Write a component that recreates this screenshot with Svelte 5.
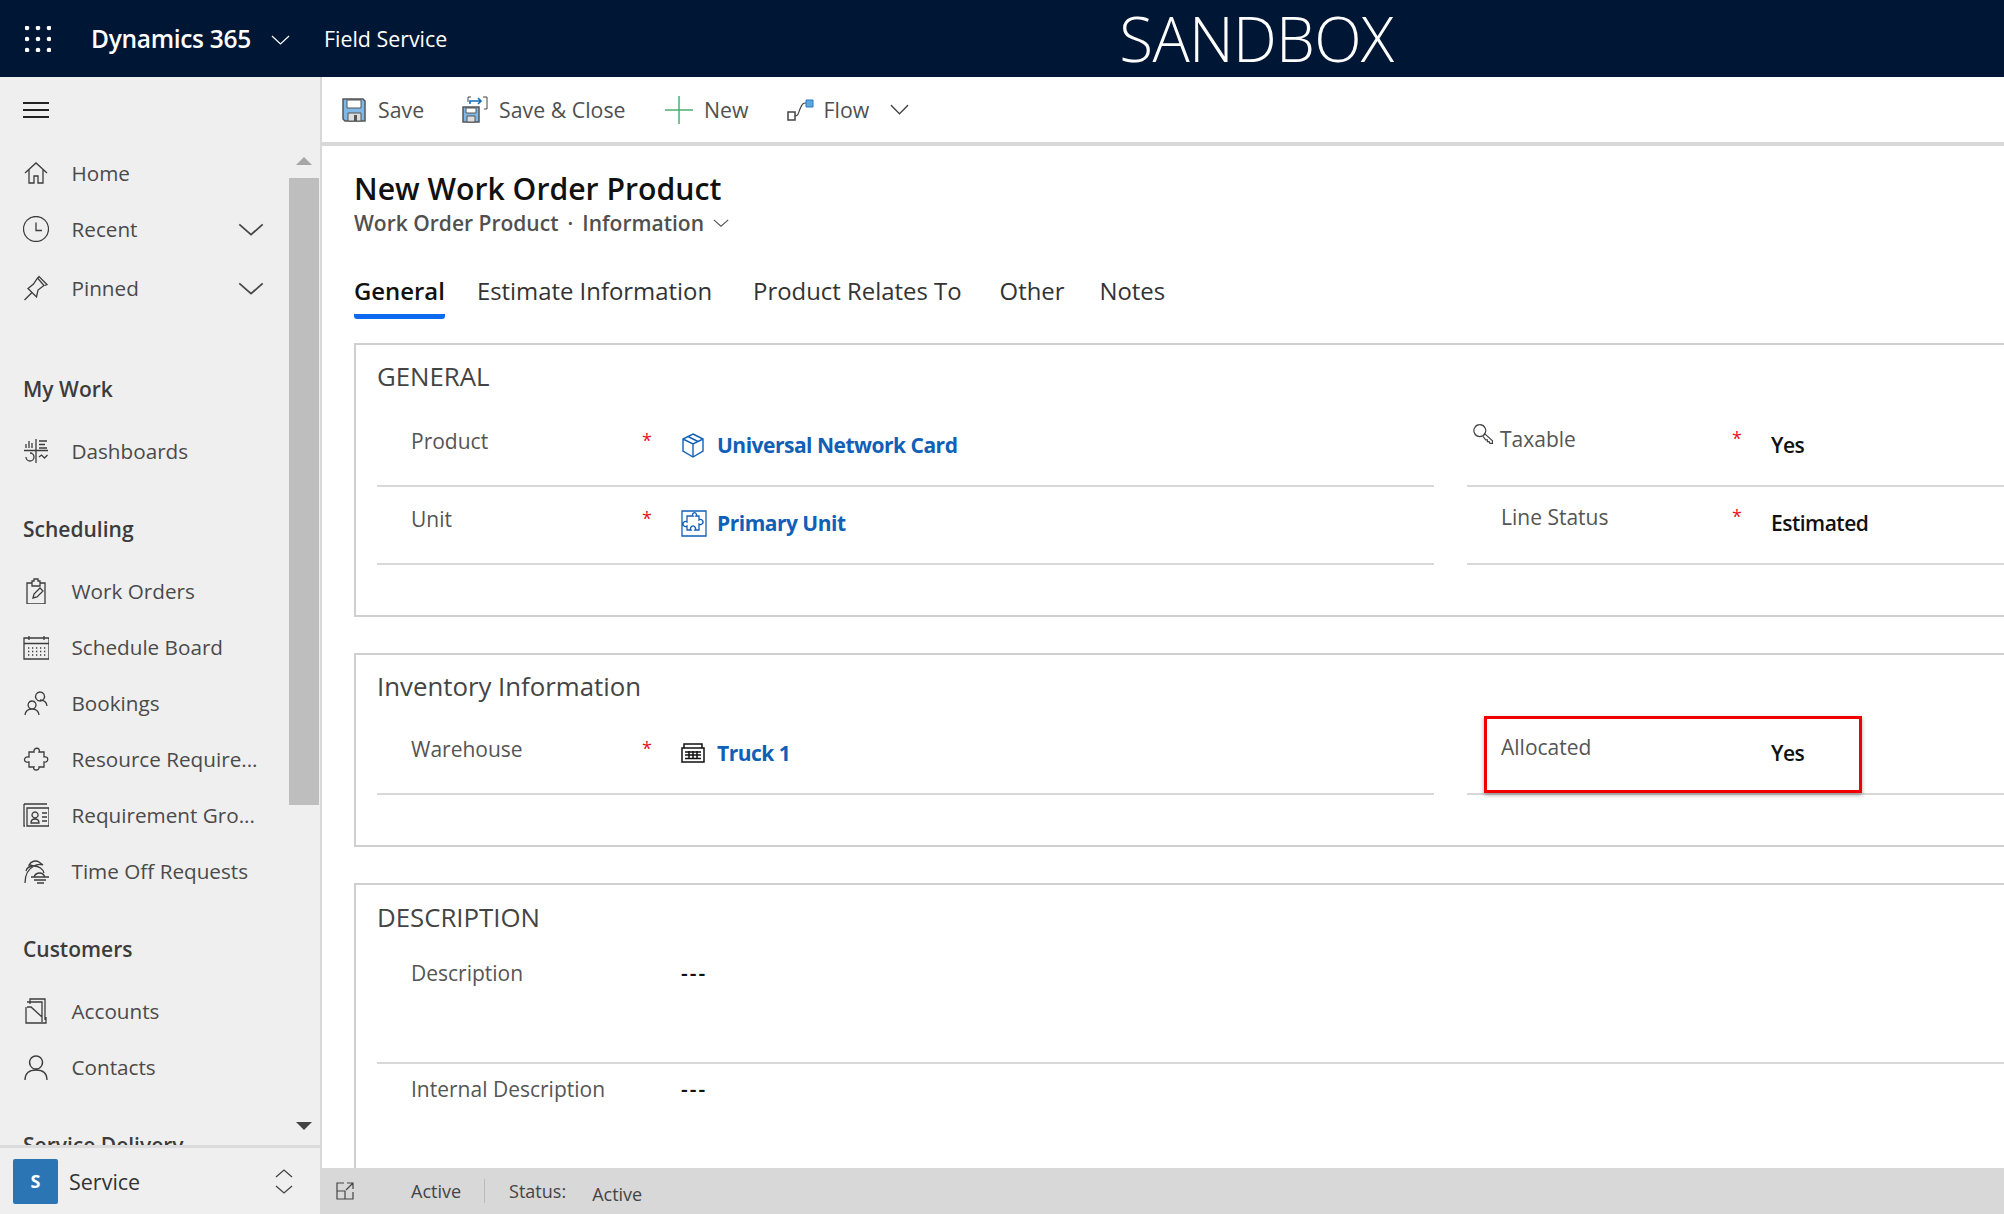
<script>
	// dotted grid inside the calendar icon
	const calDots = [14, 17.500, 21]
		.flatMap((y) => [5, 9, 13, 17, 21].map((x) => `M${x} ${y}h1.300`))
		.join('');

	const icons = {
		home: 'M2 13 13 3l11 10M6 10v13h5v-7h4v7h5V10',
		clock: 'M13 .5a12.500 12.500 0 1 0 0 25a12.500 12.500 0 1 0 0-25M13 6.500v8h6',
		pin: 'M1.500 25 9 17.500M5 13.500l8.500 8.500 1.500-7 6-4.500-6.500-7.500-4 6zM15 3l1-1.500 8 8-2 1',
		dash: 'M13 1v24M1 12.500h24M3 10V6M6 10V3M9 10V5M16 3h8M16 6.500h6M16 10h8M3 19a4 4 0 1 0 4-4M16 19l2.500-2 3 3 3-3',
		orders: 'M4 5h5V3h2V1h4v2h2v2h5v21H4zM9 5v3h8V5M10 20l1-4 6-6 3 3-6 6z',
		calendar: 'M1 4h25v21H1zM1 9.500h25M6 2v4M21 2v4' + calDots,
		bookings: 'M17 2a4.500 4.500 0 1 0 0.100 0M24 16c-.500-4-3-6-7-6M9 11a4 4 0 1 0 .100 0M2 25c.500-4 3-6 7-6s6.500 2 7 6',
		puzzle: 'M6 6h5c-1-5 7-5 5 0h5v5c5-1.500 5 6 0 5v5h-5c1 4-7 4-5 0H6v-5c-6 1.500-6-6 0-5z',
		card: 'M1 2h23M1 2v22h1M4 6h22v18H4zM8 21c0-3 2-4 4-4s4 1 4 4zM12 10a3 3 0 1 0 .100 0M19 11h5M19 15h5M19 19h5',
		palm: 'M2 25c0-8 3-14 9-17M6 7c2-4 7-5 10-3l4 3c-3-1-6-1-9 1-3-1-5-1-5-1zM3 13c1-4 4-5 8-5M11 8c5 0 9 3 10 7M11 19c1-3 4-4 6-4s4 2 5 4zM8 19h18M11 22h12M14 25h7',
		doc: 'M7 6V1h15v21M4 4h15v20M4 9h4l11 10M3 9v16h20V19',
		person: 'M13 2a6.500 6.500 0 1 0 .100 0M2 26c0-7 4-10 11-10s11 3 11 10'
	};

	const groups = [
		{ items: [
			{ label: 'Home', icon: 'home' },
			{ label: 'Recent', icon: 'clock', more: true },
			{ label: 'Pinned', icon: 'pin', more: true }
		] },
		{ title: 'My Work', items: [{ label: 'Dashboards', icon: 'dash' }] },
		{ title: 'Scheduling', items: [
			{ label: 'Work Orders', icon: 'orders' },
			{ label: 'Schedule Board', icon: 'calendar' },
			{ label: 'Bookings', icon: 'bookings' },
			{ label: 'Resource Require...', icon: 'puzzle' },
			{ label: 'Requirement Gro...', icon: 'card' },
			{ label: 'Time Off Requests', icon: 'palm' }
		] },
		{ title: 'Customers', items: [
			{ label: 'Accounts', icon: 'doc' },
			{ label: 'Contacts', icon: 'person' }
		] },
		{ title: 'Service Delivery', items: [] }
	];

	const tabs = ['General', 'Estimate Information', 'Product Relates To', 'Other', 'Notes'];
</script>

{#snippet chevron(w, h, cls = '')}
	<svg class={cls} width={w} height={h} viewBox="0 0 20 10" preserveAspectRatio="none" fill="none" stroke="currentColor" stroke-width="1.300"><path d="M1 1l9 8 9-8" /></svg>
{/snippet}

<div class="app">
	<header class="topbar">
		<svg class="waffle" width="26" height="26" viewBox="0 0 26 26" fill="#fff">
			{#each [2, 13, 24] as y}
				{#each [2, 13, 24] as x}
					<circle cx={x} cy={y} r="2.300" />
				{/each}
			{/each}
		</svg>
		<span class="brand">Dynamics 365</span>
		{@render chevron(19, 10, 'brand-chev')}
		<span class="app-name">Field Service</span>
		<span class="env">SANDBOX</span>
	</header>

	<div class="body">
		<aside class="sidebar">
			<div class="burger"><span></span><span></span><span></span></div>
			<div class="nav-wrap">
				<nav class="nav">
					{#each groups as group}
						<div class="group">
							{#if group.title}<h3>{group.title}</h3>{/if}
							{#each group.items as item}
								<div class="nav-item" class:more={item.more}>
									<svg width="26" height="26" viewBox="0 0 26 26" fill="none" stroke="#3c3c3c" stroke-width="1.300"><path d={icons[item.icon]} /></svg>
									<span>{item.label}</span>
									{#if item.more}{@render chevron(26, 13, 'nav-chev')}{/if}
								</div>
							{/each}
						</div>
					{/each}
				</nav>
				<div class="scrollbar">
					<div class="arrow up"></div>
					<div class="thumb"></div>
					<div class="arrow down"></div>
				</div>
			</div>
			<div class="area">
				<div class="tile">S</div>
				<span>Service</span>
				<svg width="18" height="25" viewBox="0 0 18 25" fill="none" stroke="#444" stroke-width="1.300"><path d="M1 8l8-7 8 7M1 17l8 7 8-7" /></svg>
			</div>
		</aside>

		<main class="main">
			<div class="commands">
				<button class="cmd save">
					<svg width="24" height="24" viewBox="0 0 24 24"><path d="M1 1h20l2 2v20H3l-2-2z" fill="#7fb8e6" stroke="#555" stroke-width="1.500" /><path d="M5 2h14v8H5z" fill="#fff" stroke="#555" /><path d="M6 15h13v8H6z" fill="#ddd" stroke="#555" /><path d="M12 17h3v6h-3z" fill="#555" /></svg>
					Save
				</button>
				<button class="cmd saveclose">
					<svg width="26" height="27" viewBox="0 0 26 27"><path d="M1 11h16v15H1z" fill="#7fb8e6" stroke="#555" stroke-width="1.500" /><path d="M4 12h10v5H4z" fill="#fff" stroke="#555" /><path d="M5 20h8v6H5z" fill="#ddd" stroke="#555" /><path d="M6 6V1h3M21 1h4v12h-3" fill="none" stroke="#444" /><path d="M8 8V5h11M16 2l3 3-3 3" fill="none" stroke="#106ebe" stroke-width="1.600" /></svg>
					Save &amp; Close
				</button>
				<button class="cmd new">
					<svg width="28" height="28" viewBox="0 0 28 28" stroke="#4caf72" stroke-width="1.500"><path d="M14 0v28M0 14h28" /></svg>
					New
				</button>
				<button class="cmd flow">
					<svg width="27" height="22" viewBox="0 0 27 22" fill="none"><path d="M1 13h7v8H1z" stroke="#444" stroke-width="1.500" /><path d="M8 17c3 0 3-2 5-7s3-6 6-6" stroke="#444" stroke-width="1.200" /><path d="M19 1h7v7h-7z" fill="#5aa7e0" stroke="#2b79c2" /></svg>
					Flow
				</button>
				{@render chevron(19, 11, 'flow-chev')}
			</div>

			<div class="content">
				<h1>New Work Order Product</h1>
				<div class="subtitle">
					Work Order Product <span class="dot">·</span> Information
					{@render chevron(16, 8, 'sub-chev')}
				</div>
				<div class="tabs">
					{#each tabs as tab, i}
						<div class="tab" class:active={i === 0}>{tab}</div>
					{/each}
				</div>

				<section class="card first">
					<h2>GENERAL</h2>
					<div class="cols">
						<div class="field">
							<label>Product</label><i>*</i>
							<div class="value link">
								<svg width="24" height="26" viewBox="0 0 24 26" fill="none" stroke="#1160b7" stroke-width="1.400"><path d="M12 2l10 5v12l-10 6-10-6V7zM2 7l10 5 10-5M12 12v13M7 4.500l10 5" /></svg>
								Universal Network Card
							</div>
						</div>
						<div class="field right">
							<label class="keyed">
								<svg width="22" height="22" viewBox="0 0 26 24" fill="none" stroke="#444" stroke-width="1.400"><path d="M8 1a7 7 0 1 0 .100 0M13 11l10 9v3h-3l-1-2h-2v-2h-2l-3-4M6 5.500v.100" /></svg>
								Taxable
							</label><i>*</i>
							<div class="value plain">Yes</div>
						</div>
						<div class="field">
							<label>Unit</label><i>*</i>
							<div class="value link">
								<svg class="unit-icon" width="26" height="27" viewBox="0 0 26 27" fill="none" stroke="#1160b7" stroke-width="1.300"><path d="M1 1h24v25H1zM9 6h3a2 2 0 1 1 3 0h3v4a2.500 2.500 0 1 1 0 4v6h-4a2.500 2.500 0 1 0-4 0H6v-4a2.500 2.500 0 1 1 0-4V6z" /></svg>
								Primary Unit
							</div>
						</div>
						<div class="field right">
							<label>Line Status</label><i>*</i>
							<div class="value plain">Estimated</div>
						</div>
					</div>
				</section>

				<section class="card inventory">
					<h2>Inventory Information</h2>
					<div class="cols">
						<div class="field">
							<label>Warehouse</label><i>*</i>
							<div class="value link">
								<svg width="24" height="20" viewBox="0 0 24 20" fill="none" stroke="#111" stroke-width="1.500"><path d="M1 5h22v14H1zM3 1h18v4H3zM4 9h16M4 12h16M4 15.500h16M8 8v8M12 8v8M16 8v8" /></svg>
								Truck 1
							</div>
						</div>
						<div class="field right">
							<label>Allocated</label><i></i>
							<div class="value plain">Yes</div>
							<div class="highlight"></div>
						</div>
					</div>
				</section>

				<section class="card description">
					<h2>DESCRIPTION</h2>
					<div class="field tall">
						<label>Description</label><i></i>
						<div class="value plain dash">---</div>
					</div>
					<div class="field tall">
						<label>Internal Description</label><i></i>
						<div class="value plain dash">---</div>
					</div>
				</section>
			</div>

			<footer class="status">
				<svg width="18" height="18" viewBox="0 0 18 18" fill="none" stroke="#444" stroke-width="1.200"><path d="M8 1H1v16h16v-7M1 9h8v8M11 1h6v6M17 1l-7 7" /></svg>
				<span class="st-active">Active</span>
				<span class="sep"></span>
				<span class="st-label">Status:</span>
				<span class="st-value">Active</span>
			</footer>
		</main>
	</div>
</div>

<style>
	:global(body) {
		margin: 0;
		background: #fff;
	}

	.app {
		width: 2004px;
		height: 1214px;
		display: flex;
		flex-direction: column;
		overflow: hidden;
		font-family: 'Open Sans', 'Noto Sans', sans-serif;
		font-size: 20px;
		color: #444;
	}

	.topbar {
		height: 77px;
		flex: none;
		display: flex;
		align-items: center;
		background: #001635;
		color: #fff;
		padding-left: 25px;
	}

	.brand {
		margin-left: 40px;
		font-size: 24.500px;
		font-weight: 600;
		letter-spacing: -0.3px;
	}

	.topbar :global(.brand-chev) {
		margin: 3px 0 0 20px;
	}

	.app-name {
		margin-left: 34px;
		font-size: 21.400px;
	}

	.env {
		margin-left: 672px;
		font-size: 62px;
		font-weight: 300;
		letter-spacing: -0.7px;
		line-height: 77px;
	}

	.body {
		flex: 1;
		min-height: 0;
		display: flex;
	}

	.sidebar {
		width: 320px;
		flex: none;
		display: flex;
		flex-direction: column;
		background: #efefef;
		border-right: 2px solid #d8d8d8;
	}

	.burger {
		height: 65px;
		flex: none;
		display: flex;
		flex-direction: column;
		justify-content: center;
		gap: 5px;
		padding-left: 23px;
	}

	.burger span {
		width: 26px;
		height: 2px;
		background: #222;
	}

	.nav-wrap {
		flex: 1;
		min-height: 0;
		display: flex;
		overflow: hidden;
	}

	.nav {
		flex: 1;
		min-width: 0;
		padding-top: 3px;
	}

	.group {
		margin-bottom: 32px;
	}

	.group:first-child {
		margin-bottom: 54.500px;
	}

	.group h3 {
		margin: 0 0 16px 23px;
		height: 36px;
		line-height: 36px;
		font-size: 21px;
		font-weight: 600;
		color: #3c3c3c;
	}

	.nav-item {
		height: 56px;
		display: flex;
		align-items: center;
		padding-left: 23px;
		gap: 22.500px;
		white-space: nowrap;
		font-size: 20.700px;
		color: #4a4a4a;
	}

	.nav-item.more + .nav-item.more {
		margin-top: 3px;
	}

	.nav-item :global(.nav-chev) {
		margin-left: auto;
		margin-right: 24px;
		color: #444;
	}

	.scrollbar {
		width: 32px;
		flex: none;
		display: flex;
		flex-direction: column;
		align-items: center;
	}

	.arrow {
		width: 0;
		height: 0;
		border-left: 8px solid transparent;
		border-right: 8px solid transparent;
	}

	.arrow.up {
		margin: 15px 0 13px;
		border-bottom: 8px solid #a6a6a6;
	}

	.arrow.down {
		margin-top: auto;
		margin-bottom: 15px;
		border-top: 8px solid #444;
	}

	.thumb {
		width: 30px;
		height: 627px;
		background: #bebebe;
	}

	.area {
		height: 69px;
		flex: none;
		box-sizing: border-box;
		display: flex;
		align-items: center;
		border-top: 3px solid #dcdcdc;
		padding: 0 27px 0 13px;
		font-size: 21.500px;
		font-weight: 500;
		color: #333;
	}

	.area span {
		margin-left: 11px;
		flex: 1;
	}

	.tile {
		width: 45px;
		height: 45px;
		display: flex;
		align-items: center;
		justify-content: center;
		background: #2b75b5;
		border-radius: 2px;
		color: #fff;
		font-size: 18px;
		font-weight: 700;
	}

	.main {
		flex: 1;
		min-width: 0;
		display: flex;
		flex-direction: column;
	}

	.commands {
		height: 65px;
		flex: none;
		display: flex;
		align-items: center;
		border-bottom: 4px solid #d8d8d8;
		padding-left: 20px;
	}

	.cmd {
		display: flex;
		align-items: center;
		padding: 0;
		border: 0;
		background: none;
		font: inherit;
		font-size: 21.300px;
		color: #505050;
		margin-right: 38px;
		gap: 11px;
	}

	.save {
		gap: 12px;
	}

	.saveclose {
		margin-right: 39.500px;
	}

	.flow {
		gap: 10px;
		margin-right: 21px;
	}

	.commands :global(.flow-chev) {
		color: #444;
	}

	.content {
		flex: 1;
		min-height: 0;
		overflow: hidden;
		padding: 22px 0 0 32px;
	}

	h1 {
		margin: 0;
		font-size: 30.200px;
		line-height: 41px;
		font-weight: 600;
		color: #111;
	}

	.subtitle {
		display: flex;
		align-items: center;
		gap: 6px;
		height: 28px;
		font-size: 21px;
		font-weight: 600;
		color: #505050;
	}

	.dot {
		margin: 0 3px;
	}

	.subtitle :global(.sub-chev) {
		margin-left: 3px;
	}

	.tabs {
		display: flex;
		margin-top: 34px;
		height: 48px;
	}

	.tab {
		height: 48px;
		box-sizing: border-box;
		line-height: 40px;
		font-size: 23.900px;
		color: #333;
		white-space: nowrap;
	}

	.tab:nth-child(1) {
		margin-right: 32px;
	}

	.tab:nth-child(2) {
		margin-right: 41px;
	}

	.tab:nth-child(3) {
		margin-right: 38px;
	}

	.tab:nth-child(4) {
		margin-right: 35px;
	}

	.tab.active {
		color: #111;
		font-weight: 600;
		border-bottom: 5px solid #0b6af0;
		border-radius: 0 0 3px 3px;
	}

	.card {
		margin: 36px -20px 0 0;
		box-sizing: border-box;
		border: 2px solid #cfcfcf;
		padding: 16px 0 50px 21px;
	}

	.card.first {
		margin-top: 24px;
	}

	.card.description {
		padding-top: 17px;
	}

	h2 {
		margin: 0 0 16px;
		font-size: 25.800px;
		line-height: 30px;
		font-weight: 400;
		color: #444;
	}

	.first h2 {
		margin-bottom: 18px;
	}

	.cols {
		display: grid;
		grid-template-columns: 1057px 1fr;
		column-gap: 33px;
	}

	.field {
		position: relative;
		height: 78px;
		box-sizing: border-box;
		display: grid;
		grid-template-columns: 235px 35px 1fr;
		padding-left: 34px;
		border-bottom: 2px solid #d8d8d8;
		line-height: 30px;
	}

	.field.right {
		grid-template-columns: 235px 35px 1fr;
		padding-left: 34px;
	}

	.field.tall {
		height: 116px;
	}

	.field.tall + .field.tall {
		height: 100px;
		border-bottom: 0;
	}

	label {
		padding-top: 17px;
		color: #555;
		font-size: 21px;
		white-space: nowrap;
	}

	.right label {
		padding-top: 15px;
	}

	.tall label {
		padding-top: 10px;
	}

	.keyed {
		display: flex;
		align-items: flex-start;
		gap: 5px;
		margin-left: -28px;
	}

	.keyed svg {
		margin-top: -1px;
	}

	i {
		margin-left: -4px;
		padding-top: 16px;
		font-style: normal;
		color: #e81123;
		font-size: 18px;
	}

	.right i {
		padding-top: 14px;
	}

	.value {
		display: flex;
		align-items: center;
		height: 30px;
		margin-top: 21px;
		gap: 12px;
		white-space: nowrap;
		font-size: 21px;
		font-weight: 600;
		letter-spacing: -0.500px;
	}

	.tall .value {
		margin-top: 10px;
	}

	.dash {
		color: #222;
		letter-spacing: 2px;
	}

	.link {
		color: #1160b7;
		font-weight: 700;
	}

	.link svg {
		flex: none;
	}

	.link .unit-icon {
		margin-right: -2px;
	}

	.plain {
		color: #111;
	}

	.highlight {
		position: absolute;
		left: 17px;
		top: -1px;
		width: 378px;
		height: 77px;
		box-sizing: border-box;
		border: 3px solid #f00000;
		box-shadow: 0 2px 4px rgba(0, 0, 0, 0.35);
	}

	.status {
		height: 46px;
		flex: none;
		display: flex;
		align-items: center;
		background: #d8d8d8;
		padding-left: 14px;
		font-size: 18px;
		color: #444;
	}

	.st-active {
		margin-left: 57px;
	}

	.sep {
		width: 1px;
		height: 24px;
		background: #bbb;
		margin: 0 24px 0 23px;
	}

	.st-value {
		margin-left: 26px;
		margin-top: 6px;
	}
</style>
